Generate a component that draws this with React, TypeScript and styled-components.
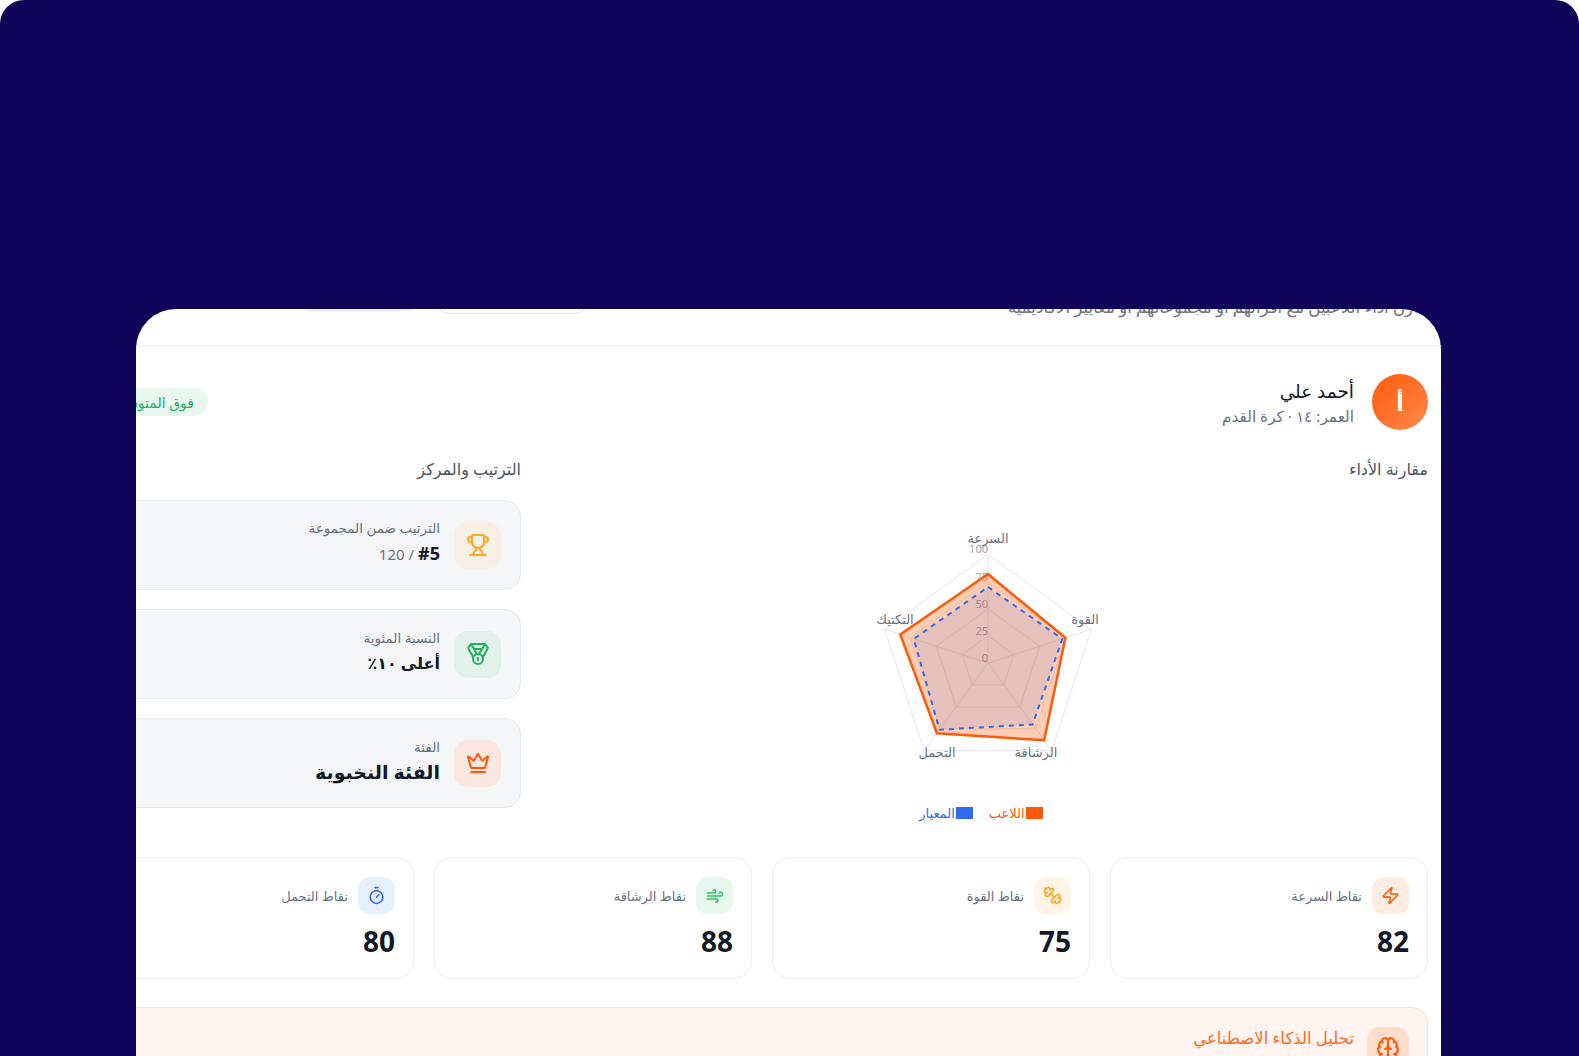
import React from 'react'
import styled, { createGlobalStyle } from 'styled-components';
import { Brain, Crown, Dumbbell, Medal, Timer, Trophy, Wind, Zap } from 'lucide-react';

const GlobalStyle = createGlobalStyle`
  html, body {
    margin: 0;
    padding: 0;
    background: #ffffff;
    overflow: hidden;
  }

  * {
    box-sizing: border-box;
  }

  body {
    font-family: "Noto Sans", "Open Sans", "DejaVu Sans", sans-serif;
  }
`;

const Shell = styled.div`
  height: 1056px;
  padding: 309px 138px 0 136px;
  background: #10045a;
  border-radius: 24px 24px 0 0;
`;

const Panel = styled.div`
  height: 747px;
  overflow: hidden;
  direction: rtl;
  background: #ffffff;
  border-radius: 40px 40px 0 0;
`;

const Header = styled.div`
  height: 98px;
  margin-top: -60px;
  padding: 0 15px 30px 164px;
  display: flex;
  align-items: flex-end;
  justify-content: space-between;
  border-bottom: 2px solid #f1f2f5;
`;

const Subtitle = styled.p`
  margin: 0 0 -2px;
  font-size: 16.5px;
  line-height: 20px;
  color: #6b7280;
`;

const HeaderActions = styled.div`
  display: flex;
  align-items: flex-end;
  gap: 20px;
`;

const HeaderPill = styled.div<{ $width: number; $filled?: boolean }>`
  width: ${(p) => p.$width}px;
  height: 40px;
  margin-bottom: ${(p) => (p.$filled ? 3 : 1)}px;
  border-radius: 12px;
  background: ${(p) => (p.$filled ? '#f1f2f6' : '#ffffff')};
  border: 1px solid ${(p) => (p.$filled ? '#f1f2f6' : '#e5e7eb')};
`;

const Body = styled.div`
  width: 1334px;
  margin-right: 13px;
  padding-top: 27px;
`;

const PlayerRow = styled.div`
  display: flex;
  align-items: center;
  justify-content: space-between;
  margin-bottom: 30px;
`;

const PlayerInfo = styled.div`
  display: flex;
  align-items: center;
  gap: 18px;
`;

const Avatar = styled.div`
  width: 56px;
  height: 56px;
  border-radius: 50%;
  display: flex;
  align-items: center;
  justify-content: center;
  font-size: 22px;
  font-weight: 600;
  color: #ffffff;
  background: linear-gradient(135deg, #ff5a0a, #ff8a4c);
`;

const PlayerName = styled.div`
  margin-top: 2px;
  font-size: 18.5px;
  line-height: 26px;
  font-weight: 500;
  color: #111827;
`;

const PlayerMeta = styled.div`
  font-size: 15.3px;
  line-height: 24px;
  color: #6b7280;
`;

const Badge = styled.div`
  width: 114px;
  height: 28px;
  padding: 0 14px;
  border-radius: 14px;
  display: flex;
  align-items: center;
  font-size: 14px;
  white-space: nowrap;
  color: #22b35e;
  background: #e8f8ef;
`;

const Columns = styled.div`
  display: grid;
  grid-template-columns: 880px 427px;
  gap: 27px;
  margin-bottom: 34px;
`;

const SectionTitle = styled.h3`
  margin: -1px 0 21px;
  font-size: 16px;
  line-height: 20px;
  font-weight: 500;
  color: #4b5563;
`;

const RankList = styled.div`
  display: flex;
  flex-direction: column;
  gap: 19px;
`;

const RankCard = styled.div`
  height: 90px;
  padding: 0 19px;
  display: flex;
  align-items: center;
  gap: 14px;
  background: #f5f6f8;
  border: 1px solid #e8eaee;
  border-radius: 16px;
`;

const IconBox = styled.div<{ $bg: string; $color: string; $size: number; $radius?: number; $flip?: boolean }>`
  width: ${(p) => p.$size}px;
  height: ${(p) => p.$size}px;
  flex: none;
  display: flex;
  align-items: center;
  justify-content: center;
  border-radius: ${(p) => p.$radius ?? 12}px;
  color: ${(p) => p.$color};
  background: ${(p) => p.$bg};

  svg {
    transform: ${(p) => (p.$flip ? 'scaleX(-1)' : 'none')};
  }
`;

const RankText = styled.div`
  margin-top: -4px;
`;

const RankLabel = styled.div`
  font-size: 13.5px;
  line-height: 18px;
  color: #6b7280;
`;

const RankValue = styled.div<{ $size: number }>`
  margin-top: 3px;
  font-size: ${(p) => p.$size}px;
  line-height: 26px;
  font-weight: 700;
  color: #111827;
`;

const RankScore = styled.div`
  margin-top: 3px;
  display: flex;
  align-items: baseline;
  gap: 4px;
  line-height: 26px;
  font-size: 15px;
  color: #6b7280;

  strong {
    font-size: 18px;
    font-weight: 700;
    color: #111827;
  }
`;

const ChartSvg = styled.svg`
  display: block;
  width: 880px;
  height: 303px;

  text {
    font-family: "Noto Sans", "Open Sans", "DejaVu Sans", sans-serif;
  }
`;

const Legend = styled.div`
  height: 20px;
  padding-right: 14px;
  display: flex;
  align-items: center;
  justify-content: center;
  gap: 16px;
`;

const LegendItem = styled.div<{ $color: string }>`
  display: flex;
  align-items: center;
  gap: 1px;
  font-size: 13px;
  color: ${(p) => p.$color};

  i {
    display: block;
    width: 17px;
    height: 12px;
    background: ${(p) => p.$color};
  }
`;

const StatsGrid = styled.div`
  display: grid;
  grid-template-columns: repeat(4, 318px);
  gap: 20px;
  margin-bottom: 28px;
`;

const StatCard = styled.div`
  height: 122px;
  padding: 19px 18px;
  background: #ffffff;
  border: 1px solid #eceef1;
  border-radius: 18px;
`;

const StatHead = styled.div`
  display: flex;
  align-items: center;
  gap: 10px;
  font-size: 13px;
  color: #6b7280;
`;

const StatValue = styled.div`
  margin-top: 7px;
  font-size: 28px;
  line-height: 40px;
  font-weight: 700;
  color: #111827;
`;

const InsightCard = styled.div`
  height: 120px;
  padding: 19px 18px;
  background: #fff4ef;
  border: 1px solid #ffdccb;
  border-radius: 16px;
`;

const InsightHead = styled.div`
  display: flex;
  align-items: flex-start;
  gap: 13px;
`;

const InsightTitle = styled.h4`
  margin: 0;
  font-size: 16.5px;
  line-height: 22px;
  font-weight: 500;
  color: #ff6a1f;
`;

const CENTER_X = 440;
const CENTER_Y = 163;
const RADIUS = 108.5;

const axes = [
  { label: 'السرعة', player: 82, norm: 70, lx: 440, ly: 40 },
  { label: 'القوة', player: 75, norm: 72, lx: 537, ly: 121 },
  { label: 'الرشاقة', player: 88, norm: 70, lx: 488, ly: 254 },
  { label: 'التحمل', player: 80, norm: 76, lx: 389, ly: 254 },
  { label: 'التكتيك', player: 85, norm: 72, lx: 347, ly: 121 },
];

const point = (index: number, value: number) => {
  const angle = (index * 2 * Math.PI) / axes.length;
  const r = (RADIUS * value) / 100;
  return [CENTER_X + r * Math.sin(angle), CENTER_Y - r * Math.cos(angle)];
};

const polygon = (values: number[]) =>
  values.map((v, i) => point(i, v).join(',')).join(' ');

const ticks = [0, 25, 50, 75, 100];

const RadarChart = () => (
  <ChartSvg viewBox="0 0 880 303">
    {ticks.slice(1).map((t) => (
      <polygon key={t} points={polygon(axes.map(() => t))} fill="none" stroke="#e5e7eb" strokeWidth="1" />
    ))}
    {axes.map((_, i) => {
      const [x, y] = point(i, 100);
      return <line key={i} x1={CENTER_X} y1={CENTER_Y} x2={x} y2={y} stroke="#e5e7eb" strokeWidth="1" />;
    })}
    {ticks.map((t) => (
      <text key={t} x={CENTER_X} y={CENTER_Y - (RADIUS * t) / 100 - 4} textAnchor="end" dominantBaseline="middle" fontSize="11" fill="#9ca3af" direction="ltr">
        {t}
      </text>
    ))}
    {axes.map((a) => (
      <text key={a.label} x={a.lx} y={a.ly} textAnchor="middle" dominantBaseline="middle" fontSize="13" fill="#6b7280">
        {a.label}
      </text>
    ))}
    <polygon points={polygon(axes.map((a) => a.player))} fill="#ff5a0a" fillOpacity="0.3" stroke="#ff5a0a" strokeWidth="2.5" />
    <polygon points={polygon(axes.map((a) => a.norm))} fill="#2f6bf0" fillOpacity="0.12" stroke="#2f6bf0" strokeWidth="2" strokeDasharray="5 5" />
  </ChartSvg>
);

const stats = [
  { label: 'نقاط السرعة', value: 82, Icon: Zap, bg: '#ffece3', color: '#ff5a0a', size: 19, flip: false },
  { label: 'نقاط القوة', value: 75, Icon: Dumbbell, bg: '#fff4e5', color: '#ffa726', size: 19, flip: true },
  { label: 'نقاط الرشاقة', value: 88, Icon: Wind, bg: '#e9f8ef', color: '#22c55e', size: 18, flip: false },
  { label: 'نقاط التحمل', value: 80, Icon: Timer, bg: '#e7effe', color: '#2f6bf0', size: 19, flip: false },
];

const App = () => {
  return (
    <Shell>
      <GlobalStyle />
      <Panel>
        <Header>
          <Subtitle>قارن أداء اللاعبين مع أقرانهم أو مجموعاتهم أو معايير الأكاديمية</Subtitle>
          <HeaderActions>
            <HeaderPill $width={150} />
            <HeaderPill $width={117} $filled />
          </HeaderActions>
        </Header>

        <Body>
          <PlayerRow>
            <PlayerInfo>
              <Avatar>أ</Avatar>
              <div>
                <PlayerName>أحمد علي</PlayerName>
                <PlayerMeta>العمر: ١٤ · كرة القدم</PlayerMeta>
              </div>
            </PlayerInfo>
            <Badge>فوق المتوسط</Badge>
          </PlayerRow>

          <Columns>
            <div>
              <SectionTitle>مقارنة الأداء</SectionTitle>
              <RadarChart />
              <Legend>
                <LegendItem $color="#ff5a0a"><i />اللاعب</LegendItem>
                <LegendItem $color="#2f6bf0"><i />المعيار</LegendItem>
              </Legend>
            </div>
            <div>
              <SectionTitle>الترتيب والمركز</SectionTitle>
              <RankList>
                <RankCard>
                  <IconBox $size={47} $radius={14} $bg="#f7f0e5" $color="#ffa726"><Trophy size={24} /></IconBox>
                  <RankText>
                    <RankLabel>الترتيب ضمن المجموعة</RankLabel>
                    <RankScore><strong>#5</strong> / 120</RankScore>
                  </RankText>
                </RankCard>
                <RankCard>
                  <IconBox $size={47} $radius={14} $bg="#e2f1ea" $color="#22b35e"><Medal size={24} /></IconBox>
                  <RankText>
                    <RankLabel>النسبة المئوية</RankLabel>
                    <RankValue $size={16}>أعلى ١٠٪</RankValue>
                  </RankText>
                </RankCard>
                <RankCard>
                  <IconBox $size={47} $radius={14} $bg="#fbe7df" $color="#ff5a0a"><Crown size={24} /></IconBox>
                  <RankText>
                    <RankLabel>الفئة</RankLabel>
                    <RankValue $size={19}>الفئة النخبوية</RankValue>
                  </RankText>
                </RankCard>
              </RankList>
            </div>
          </Columns>

          <StatsGrid>
            {stats.map(({ label, value, Icon, bg, color, size, flip }) => (
              <StatCard key={label}>
                <StatHead>
                  <IconBox $size={37} $bg={bg} $color={color} $flip={flip}><Icon size={size} /></IconBox>
                  {label}
                </StatHead>
                <StatValue>{value}</StatValue>
              </StatCard>
            ))}
          </StatsGrid>

          <InsightCard>
            <InsightHead>
              <IconBox $size={42} $bg="#ffdccb" $color="#ff5a0a"><Brain size={24} /></IconBox>
              <InsightTitle>تحليل الذكاء الاصطناعي</InsightTitle>
            </InsightHead>
          </InsightCard>
        </Body>
      </Panel>
    </Shell>
  )
}

export default App
